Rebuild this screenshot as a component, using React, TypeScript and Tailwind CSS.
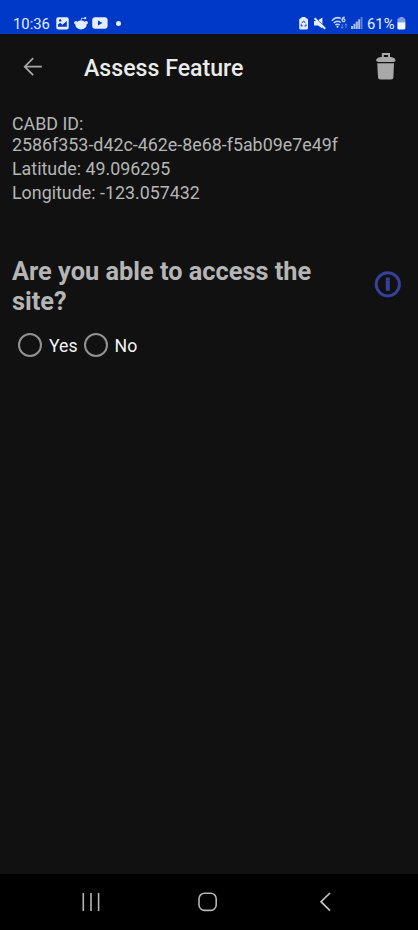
import React from "react";

function StatusBar() {
  return (
    <div className="flex h-[34px] shrink-0 items-end justify-between bg-[#0039c8] pl-[13px] pr-[12px] text-[#e4edff]">
      <div className="flex h-[22px] items-center">
        <span className="w-[37px] whitespace-nowrap pt-px text-[14.8px] leading-[22px]">10:36</span>
        <svg className="ml-[6px]" width="13" height="13" viewBox="0 0 13 13">
          <rect x="0.3" y="0.3" width="12.4" height="12.2" rx="2" fill="currentColor" />
          <path d="M2 9.8V7.6l2.2-1.8 2.2 2L10.8 4v5.8z" fill="#0039c8" />
          <circle cx="4.2" cy="3.4" r="1.2" fill="#0039c8" />
        </svg>
        <svg className="ml-[5px]" width="14" height="14" viewBox="0 0 14 14" fill="currentColor">
          <ellipse cx="7" cy="9" rx="5.6" ry="4.4" />
          <circle cx="1.9" cy="6.8" r="1.8" />
          <circle cx="12.1" cy="6.8" r="1.8" />
          <path d="M7 5 7.7 2l2.8.7" fill="none" stroke="currentColor" strokeWidth="0.7" />
          <circle cx="11.2" cy="2.2" r="1.1" />
        </svg>
        <svg className="ml-[4px]" width="16" height="12" viewBox="0 0 16 12">
          <rect x="0.2" y="0.3" width="15.4" height="11.4" rx="3" fill="currentColor" />
          <path d="M6 3.5v5L10.4 6z" fill="#0039c8" />
        </svg>
        <span className="ml-[8px] size-[5px] rounded-full bg-current" />
      </div>
      <div className="flex h-[22px] items-center">
        <svg width="10" height="13" viewBox="0 0 10 13">
          <path d="M2.6 0h4v1.3h.8A1.6 1.6 0 0 1 9 3v8a1.6 1.6 0 0 1-1.6 1.6H1.8A1.6 1.6 0 0 1 .2 11V3a1.6 1.6 0 0 1 1.6-1.7h.8z" fill="currentColor" />
          <path d="M2.8 6.2 4.6 3.8l1.8 2.4M6.9 7.3 7.2 9H5.3M3.8 9H2l.3-1.9" fill="none" stroke="#0039c8" strokeWidth="0.9" />
        </svg>
        <svg className="ml-[4px]" width="14" height="13" viewBox="0 0 14 13">
          <path d="M1 4h3L9.4.6v11L5 8.6H1z" fill="currentColor" />
          <path d="M2.8.8 12.8 10.8" stroke="#0039c8" strokeWidth="0.9" />
          <path d="M1.6 1.2 12.2 11.8" stroke="currentColor" strokeWidth="2" />
        </svg>
        <svg className="ml-[4px]" width="17" height="14" viewBox="0 0 17 14" fill="none" stroke="#c3d2f7">
          <path d="M.8 4.7Q5.2 0 9.8 2.5M2.7 7Q6 3.7 9.8 6.5M4.4 9Q6.5 7.3 8.7 9" strokeWidth="1.5" />
          <circle cx="6.5" cy="10.7" r="1" fill="#d8e3ff" stroke="none" />
          <path d="M13.7 1.1c-2.2.2-2.8 1.6-2.7 3.3" strokeWidth="1.2" />
          <circle cx="12.6" cy="4.3" r="1.4" strokeWidth="1.2" />
          <path d="M11.2 8v4M9.8 10.8l1.4 1.5 1.4-1.5M15 12V8m-1.4 1.3L15 7.8l1.4 1.5" stroke="#6f93e6" strokeWidth="0.8" />
        </svg>
        <svg className="ml-[3px]" width="12" height="12" viewBox="0 0 12 12">
          <path d="M0 9h2v3H0zM2.4 6.7h2V12h-2zM4.8 4.5h2V12h-2zM7.2 2.3h2V12h-2z" fill="#a9c0ef" />
          <path d="M9.6 0h1.9v12H9.6z" fill="#5580dd" />
        </svg>
        <span className="ml-[4px] w-[29px] whitespace-nowrap pt-px text-[14.8px] leading-[22px]">61%</span>
        <svg className="ml-[1px]" width="9" height="13" viewBox="0 0 9 13">
          <path d="M2.5 0h4v1.3H7A1.5 1.5 0 0 1 8.4 3v2.5H.4V3A1.5 1.5 0 0 1 2 1.3h.5z" fill="#7f9de6" />
          <path d="M.4 5.3h8V11A1.5 1.5 0 0 1 7 12.5H2A1.5 1.5 0 0 1 .4 11z" fill="#f1f5ff" />
        </svg>
      </div>
    </div>
  );
}

function Header() {
  return (
    <header className="flex h-[66px] shrink-0 items-center pl-[23px] pr-[21px]">
      <svg width="20" height="20" viewBox="0 0 20 20" fill="none" stroke="#a9a9a9" strokeWidth="1.7">
        <path d="M18.8 9.7H1.8M10.2 1.2 1.7 9.7l8.5 8.5" />
      </svg>
      <h1 className="ml-[41px] flex-1 whitespace-nowrap pt-[3px] text-[23.15px] font-medium leading-[30px] text-[#ebebeb]">
        Assess Feature
      </h1>
      <svg width="22" height="28" viewBox="0 0 22 28" fill="#a9a9a9">
        <path d="M6.8 5V.1h8.2V5h-2V2H8.8v3z" />
        <path d="M1 7.8C1.3 5 4.4 4 7 4h8c2.6 0 5.3 1 5.6 3.8L19 8.9H3z" />
        <path d="M2.2 10.2h16.8l-.6 14q-.2 2.3-2.3 2.3H5.3q-2.1 0-2.3-2.3z" />
      </svg>
    </header>
  );
}

function Choice({ label }: { label: string }) {
  return (
    <label className="flex items-center">
      <span className="size-[24px] rounded-full border-2 border-[#929292]" />
      <span className="ml-[7px] pt-[2px] text-[17.7px] leading-[22px] text-[#f4f4f4]">{label}</span>
    </label>
  );
}

function NavigationBar() {
  return (
    <nav className="flex h-[56px] shrink-0 items-center bg-black pl-[82px]">
      <svg width="18" height="18" viewBox="0 0 18 18" fill="none" stroke="#b5b5b5" strokeWidth="1.6">
        <path d="M1.3 0v18M9 0v18M16.6 0v18" />
      </svg>
      <svg className="ml-[98px]" width="20" height="20" viewBox="0 0 20 20" fill="none" stroke="#b5b5b5" strokeWidth="1.6">
        <rect x="1" y="1.2" width="17.2" height="17.2" rx="5.5" />
      </svg>
      <svg className="ml-[101px]" width="12" height="20" viewBox="0 0 12 20" fill="none" stroke="#c4c4c4" strokeWidth="1.7">
        <path d="M11 1 2 9.7l9 8.9" />
      </svg>
    </nav>
  );
}

export default function App() {
  return (
    <div className="flex h-[930px] w-full flex-col overflow-hidden bg-[#111111] font-['Roboto',sans-serif]">
      <StatusBar />
      <Header />
      <main className="flex-1 px-[12px] pt-[13px] text-[#b5b5b5]">
        <div className="text-[17.85px] leading-[21px]">
          <p>CABD ID:<br />2586f353-d42c-462e-8e68-f5ab09e7e49f</p>
          <p className="mt-[3px]">Latitude: 49.096295</p>
          <p className="mt-[3px]">Longitude: -123.057432</p>
        </div>
        <div className="mt-[54px] flex items-start justify-between">
          <h2 className="w-[320px] text-[25.35px] font-bold leading-[29.5px]">
            Are you able to access the<br />site?
          </h2>
          <svg className="mr-[4px] mt-[13px]" width="28" height="28" viewBox="0 0 28 28" fill="none" stroke="#35419a">
            <circle cx="13.8" cy="14.3" r="11.6" strokeWidth="3" />
            <path d="M13.8 7.5v2.9M13.8 10.8v10" strokeWidth="4" />
          </svg>
        </div>
        <div className="ml-[6px] mt-[17px] flex items-center gap-[6px]">
          <Choice label="Yes" />
          <Choice label="No" />
        </div>
      </main>
      <NavigationBar />
    </div>
  );
}
